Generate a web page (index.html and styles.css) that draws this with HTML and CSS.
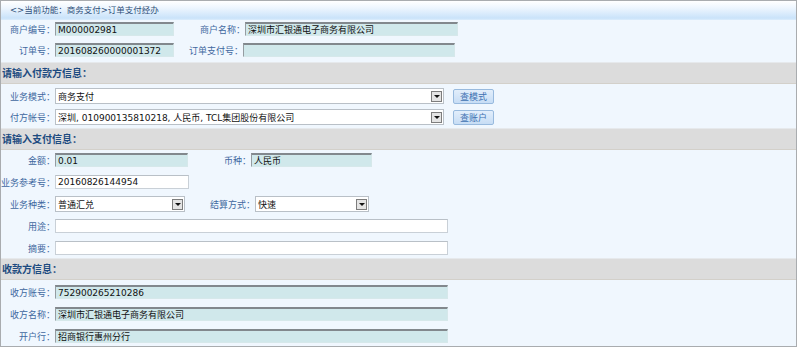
FILE: index.html
```html
<html>
    <head>
        <title>订单支付经办</title>
        <link rel="stylesheet" href="styles.css">
    </head>
    <body>
        <div class="panel">
            <div class="title">&lt;&gt;当前功能：商务支付&gt;订单支付经办</div>

            <div class="group g1">
                <div class="row">
                    <label class="lbl">商户编号：</label>
                    <input class="ro w119" value="M000002981" readonly>
                    <label class="lbl2 l71">商户名称：</label>
                    <input class="ro w213" value="深圳市汇银通电子商务有限公司" readonly>
                </div>
                <div class="row">
                    <label class="lbl">订单号：</label>
                    <input class="ro w119" value="201608260000001372" readonly>
                    <label class="lbl2 l69">订单支付号：</label>
                    <input class="ro w212" value="" readonly>
                </div>
            </div>

            <div class="sect">请输入付款方信息：</div>
            <div class="group g2">
                <div class="row tall">
                    <label class="lbl">业务模式：</label>
                    <div class="sel w389"><span class="val">商务支付</span><span class="arr"></span></div>
                    <button class="btn">查模式</button>
                </div>
                <div class="row tall">
                    <label class="lbl">付方帐号：</label>
                    <div class="sel w389"><span class="val">深圳, 010900135810218, 人民币, TCL集团股份有限公司</span><span class="arr"></span></div>
                    <button class="btn">查账户</button>
                </div>
            </div>

            <div class="sect">请输入支付信息：</div>
            <div class="group g3">
                <div class="row">
                    <label class="lbl">金额：</label>
                    <input class="ro w133" value="0.01" readonly>
                    <label class="lbl2 l63">币种：</label>
                    <input class="ro w121" value="人民币" readonly>
                </div>
                <div class="row">
                    <label class="lbl">业务参考号：</label>
                    <input class="txt w134" value="20160826144954">
                </div>
                <div class="row">
                    <label class="lbl">业务种类：</label>
                    <div class="sel w130"><span class="val">普通汇兑</span><span class="arr"></span></div>
                    <label class="lbl2 l70">结算方式：</label>
                    <div class="sel w114"><span class="val">快速</span><span class="arr"></span></div>
                </div>
                <div class="row">
                    <label class="lbl">用途：</label>
                    <input class="txt w393" value="">
                </div>
                <div class="row">
                    <label class="lbl">摘要：</label>
                    <input class="txt w393" value="">
                </div>
            </div>

            <div class="sect">收款方信息：</div>
            <div class="group g4">
                <div class="row">
                    <label class="lbl">收方账号：</label>
                    <input class="ro w393" value="752900265210286" readonly>
                </div>
                <div class="row">
                    <label class="lbl">收方名称：</label>
                    <input class="ro w393" value="深圳市汇银通电子商务有限公司" readonly>
                </div>
                <div class="row">
                    <label class="lbl">开户行：</label>
                    <input class="ro w393" value="招商银行惠州分行" readonly>
                </div>
            </div>
        </div>
    </body>
</html>
```

FILE: styles.css
```css
body{
    margin: 0;
    font-family: "DejaVu Sans", "Noto Sans CJK SC", sans-serif;
    font-size: 9px;
    background-color: #fff;
}

.panel{
    width: 797px;
    height: 347px;
    box-sizing: border-box;
    border: 1px solid #a9acaf;
    background-color: #f0f7fe;
}

.title{
    height: 19px;
    line-height: 19px;
    padding-left: 9px;
    font-size: 8.5px;
    color: #2f5079;
    background: linear-gradient(#ffffff, #eef6fe 35%, #cae3fa 90%, #dcedfc);
}

.group{
    display: flex;
    flex-direction: column;
}
.g1{ height: 42px; padding-top: 2px; gap: 7px; box-sizing: border-box; }
.g2{ height: 44px; padding-top: 4px; gap: 5px; box-sizing: border-box; }
.g3{ height: 108px; padding-top: 3px; gap: 8px; box-sizing: border-box; }
.g4{ height: 66px; padding-top: 5px; gap: 8px; box-sizing: border-box; }

.row{
    display: flex;
    align-items: center;
    height: 14px;
}
.row.tall{ height: 16px; }

.lbl, .lbl2{
    display: flex;
    justify-content: flex-end;
    white-space: nowrap;
    color: #4068a0;
    flex: none;
}
.lbl{ width: 54px; }
.l71{ width: 71px; }
.l69{ width: 69px; }
.l63{ width: 63px; }
.l70{ width: 70px; }

input{
    font-family: "DejaVu Sans", "Noto Sans CJK SC", sans-serif;
    font-size: 9px;
    height: 14px;
    box-sizing: border-box;
    padding: 0 2px;
    margin: 0;
    color: #111;
    outline: none;
    flex: none;
}
.ro{
    background-color: #d0e8eb;
    border-style: solid;
    border-width: 2px 1px 1px 1px;
    border-color: #82888d #d6e8ea #d6e8ea #959ca1;
}
.txt{
    background-color: #fff;
    border: 1px solid #c9d0d7;
    border-top-color: #b9c0c7;
}

.w119{ width: 119px; }
.w121{ width: 121px; }
.w130{ width: 130px; }
.w133{ width: 133px; }
.w134{ width: 134px; }
.w212{ width: 212px; }
.w213{ width: 213px; }
.w114{ width: 114px; }
.w389{ width: 389px; }
.w393{ width: 393px; }

.sel{
    display: flex;
    align-items: center;
    height: 16px;
    box-sizing: border-box;
    border: 1px solid #b9c0c7;
    background-color: #fff;
    color: #111;
    flex: none;
}
.sel .val{
    flex: 1;
    padding-left: 2px;
    white-space: nowrap;
    overflow: hidden;
}
.sel .arr{
    width: 11px;
    height: 11px;
    margin-right: 1px;
    box-sizing: border-box;
    border: 1px solid #7d7d7d;
    background-color: #e4e4e4;
    display: flex;
    align-items: center;
    justify-content: center;
}
.sel .arr::after{
    content: "";
    border-left: 3px solid transparent;
    border-right: 3px solid transparent;
    border-top: 3px solid #111;
}

.btn{
    margin-left: 9px;
    width: 41px;
    height: 15px;
    padding: 0;
    font-family: "Noto Sans CJK SC", sans-serif;
    font-size: 9px;
    color: #3f72b2;
    border: 1px solid #98bade;
    border-radius: 2px;
    background: linear-gradient(#e2eefb, #c7ddf5);
}

.sect{
    height: 22px;
    line-height: 21px;
    box-sizing: border-box;
    padding-left: 1px;
    font-size: 10px;
    font-weight: bold;
    color: #1d4b80;
    background-color: #dcdcdc;
    border-top: 1px solid #e6e9ec;
    border-bottom: 1px solid #d3d0ca;
}
```
